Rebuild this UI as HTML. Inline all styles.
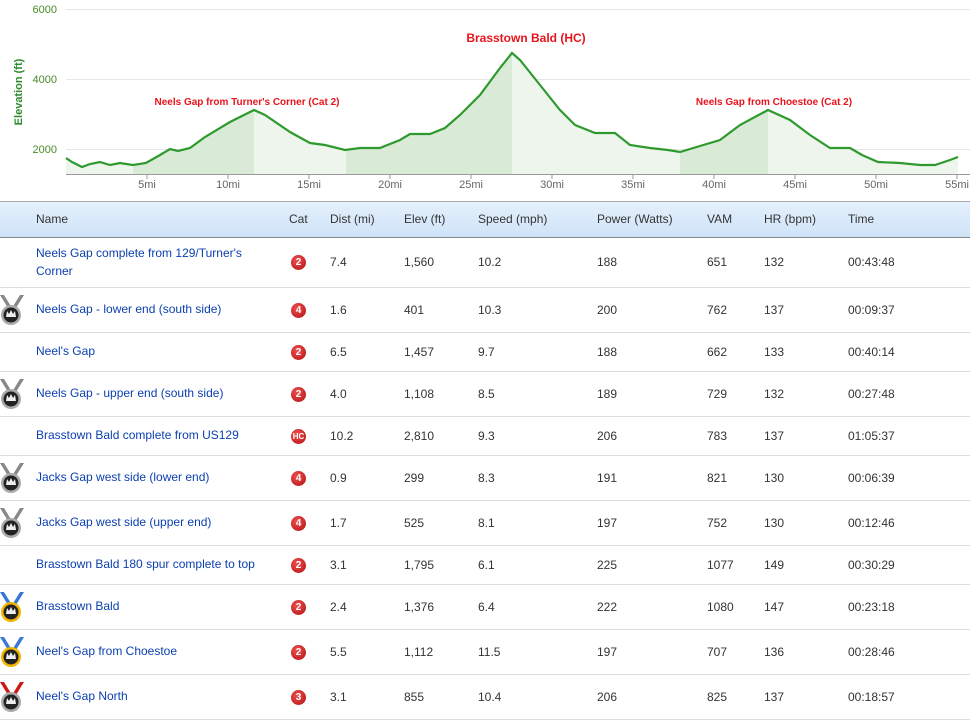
<!DOCTYPE html>
<html><head><style>
body{margin:0;width:970px;height:720px;overflow:hidden;background:#fff;font-family:"Liberation Sans",Arial,sans-serif;position:relative}
.t{position:absolute;font-size:12px;color:#333;white-space:nowrap}
.n{color:#0b3fb0;line-height:18px}
.row{position:absolute;left:0;width:970px;border-bottom:1px solid #ddd}
.b{position:absolute;width:15px;height:15px;border-radius:50%;background:radial-gradient(circle at 40% 35%,#f05050,#b01010);color:#fff;font-size:10px;font-weight:bold;text-align:center;line-height:15px}
.m{position:absolute;left:0}
</style></head><body>
<svg width="970" height="200" style="position:absolute;left:0;top:0">
<g stroke="#e6e6e6" stroke-width="1"><line x1="66" y1="9.5" x2="970" y2="9.5"/><line x1="66" y1="79.5" x2="970" y2="79.5"/><line x1="66" y1="149.5" x2="970" y2="149.5"/></g>
<defs><clipPath id="c"><polygon points="66,174 66,158 72,162 82,167 90,164 100,162 110,165 120,163 133,165 146,163 160,155 170,149 178,151 190,148 205,137 230,122 254,110 265,115 290,132 310,143 325,145 345,150 360,148 380,148 400,140 410,134 430,134 445,128 460,115 480,95 500,68 512,53 520,60 540,85 560,110 575,125 595,133 615,133 630,145 650,148 668,150 680,152 700,146 720,140 740,125 768,110 790,120 810,135 830,148 850,148 862,155 878,162 900,163 920,165 935,165 950,160 958,157 958,174"/></clipPath></defs>
<g clip-path="url(#c)"><rect x="66" y="0" width="892" height="174" fill="#edf5ec"/><rect x="133" y="0" width="121" height="174" fill="#d9ebd7"/><rect x="346" y="0" width="166" height="174" fill="#d9ebd7"/><rect x="680" y="0" width="88" height="174" fill="#d9ebd7"/></g>
<polyline fill="none" stroke="#2e9a2e" stroke-width="2.2" points="66,158 72,162 82,167 90,164 100,162 110,165 120,163 133,165 146,163 160,155 170,149 178,151 190,148 205,137 230,122 254,110 265,115 290,132 310,143 325,145 345,150 360,148 380,148 400,140 410,134 430,134 445,128 460,115 480,95 500,68 512,53 520,60 540,85 560,110 575,125 595,133 615,133 630,145 650,148 668,150 680,152 700,146 720,140 740,125 768,110 790,120 810,135 830,148 850,148 862,155 878,162 900,163 920,165 935,165 950,160 958,157"/>
<line x1="66" y1="174.5" x2="970" y2="174.5" stroke="#999"/>
<g stroke="#999"><line x1="147" y1="174" x2="147" y2="179"/><line x1="228" y1="174" x2="228" y2="179"/><line x1="309" y1="174" x2="309" y2="179"/><line x1="390" y1="174" x2="390" y2="179"/><line x1="471" y1="174" x2="471" y2="179"/><line x1="552" y1="174" x2="552" y2="179"/><line x1="633" y1="174" x2="633" y2="179"/><line x1="714" y1="174" x2="714" y2="179"/><line x1="795" y1="174" x2="795" y2="179"/><line x1="876" y1="174" x2="876" y2="179"/><line x1="957" y1="174" x2="957" y2="179"/></g>
<g font-family="Liberation Sans,Arial" font-size="11" fill="#666" text-anchor="middle"><text x="147" y="188">5mi</text><text x="228" y="188">10mi</text><text x="309" y="188">15mi</text><text x="390" y="188">20mi</text><text x="471" y="188">25mi</text><text x="552" y="188">30mi</text><text x="633" y="188">35mi</text><text x="714" y="188">40mi</text><text x="795" y="188">45mi</text><text x="876" y="188">50mi</text><text x="957" y="188">55mi</text></g>
<g font-family="Liberation Sans,Arial" font-size="11" fill="#4a8a2a" text-anchor="end"><text x="57" y="13">6000</text><text x="57" y="83">4000</text><text x="57" y="153">2000</text></g>
<text transform="translate(22,92) rotate(-90)" text-anchor="middle" font-family="Liberation Sans,Arial" font-size="11" font-weight="bold" fill="#2e8a2e">Elevation (ft)</text>
<g font-family="Liberation Sans,Arial" font-weight="bold" fill="#e8141c" text-anchor="middle"><text x="247" y="105" font-size="10">Neels Gap from Turner's Corner (Cat 2)</text><text x="526" y="42" font-size="12">Brasstown Bald (HC)</text><text x="774" y="105" font-size="10">Neels Gap from Choestoe (Cat 2)</text></g>
</svg>
<div style="position:absolute;left:0;top:201px;width:970px;height:35px;background:linear-gradient(#e4f0fc,#cfe3f8);border-top:1px solid #aaa;border-bottom:1px solid #888"></div>
<div class="t" style="top:212px;left:36px">Name</div><div class="t" style="top:212px;left:289px">Cat</div><div class="t" style="top:212px;left:330px">Dist (mi)</div><div class="t" style="top:212px;left:404px">Elev (ft)</div><div class="t" style="top:212px;left:478px">Speed (mph)</div><div class="t" style="top:212px;left:597px">Power (Watts)</div><div class="t" style="top:212px;left:707px">VAM</div><div class="t" style="top:212px;left:764px">HR (bpm)</div><div class="t" style="top:212px;left:848px">Time</div>
<div id="rows"></div>
<script>
var R=[[237,288,"Neels Gap complete from 129/Turner's<br>Corner","2","7.4","1,560","10.2","188","651","132","00:43:48",0],
[288,333,"Neels Gap - lower end (south side)","4","1.6","401","10.3","200","762","137","00:09:37",1],
[333,372,"Neel's Gap","2","6.5","1,457","9.7","188","662","133","00:40:14",0],
[372,417,"Neels Gap - upper end (south side)","2","4.0","1,108","8.5","189","729","132","00:27:48",1],
[417,456,"Brasstown Bald complete from US129","HC","10.2","2,810","9.3","206","783","137","01:05:37",0],
[456,501,"Jacks Gap west side (lower end)","4","0.9","299","8.3","191","821","130","00:06:39",1],
[501,546,"Jacks Gap west side (upper end)","4","1.7","525","8.1","197","752","130","00:12:46",1],
[546,585,"Brasstown Bald 180 spur complete to top","2","3.1","1,795","6.1","225","1077","149","00:30:29",0],
[585,630,"Brasstown Bald","2","2.4","1,376","6.4","222","1080","147","00:23:18",2],
[630,675,"Neel's Gap from Choestoe","2","5.5","1,112","11.5","197","707","136","00:28:46",2],
[675,720,"Neel's Gap North","3","3.1","855","10.4","206","825","137","00:18:57",3]];
var h="",X=[330,404,478,597,707,764,848];
R.forEach(function(r){var c=Math.round((r[0]+r[1])/2),ty=c-8;
h+='<div class="row" style="top:'+r[0]+'px;height:'+(r[1]-r[0]-1)+'px"></div>';
var two=r[2].indexOf("<br>")>0;
h+='<div class="t n" style="top:'+(two?c-19:c-11)+'px;left:36px">'+r[2]+'</div>';
h+='<div class="b" style="top:'+(c-8)+'px;left:291px;'+(r[3]=="HC"?"font-size:8px":"")+'">'+r[3]+'</div>';
for(var i=0;i<7;i++)h+='<div class="t" style="top:'+ty+'px;left:'+X[i]+'px">'+r[4+i]+'</div>';
if(r[11]){var rib=r[11]==1?"#888":r[11]==2?"#3a78d8":"#d01818",rim=r[11]==2?"#f2b400":"#aaa";
h+='<svg class="m" style="top:'+(c-18)+'px" width="24" height="34"><path d="M0 2 L8 15 L12 15 L4 2Z M24 2 L16 15 L12 15 L20 2Z" fill="'+rib+'"/><circle cx="11" cy="22" r="10" fill="'+rim+'"/><circle cx="11" cy="22" r="7.5" fill="#222"/><path d="M6 24 L7 18 L9 21 L11 17 L13 21 L15 18 L16 24Z" fill="#eee"/></svg>';}
});
document.getElementById("rows").innerHTML=h;
</script>
</body></html>
